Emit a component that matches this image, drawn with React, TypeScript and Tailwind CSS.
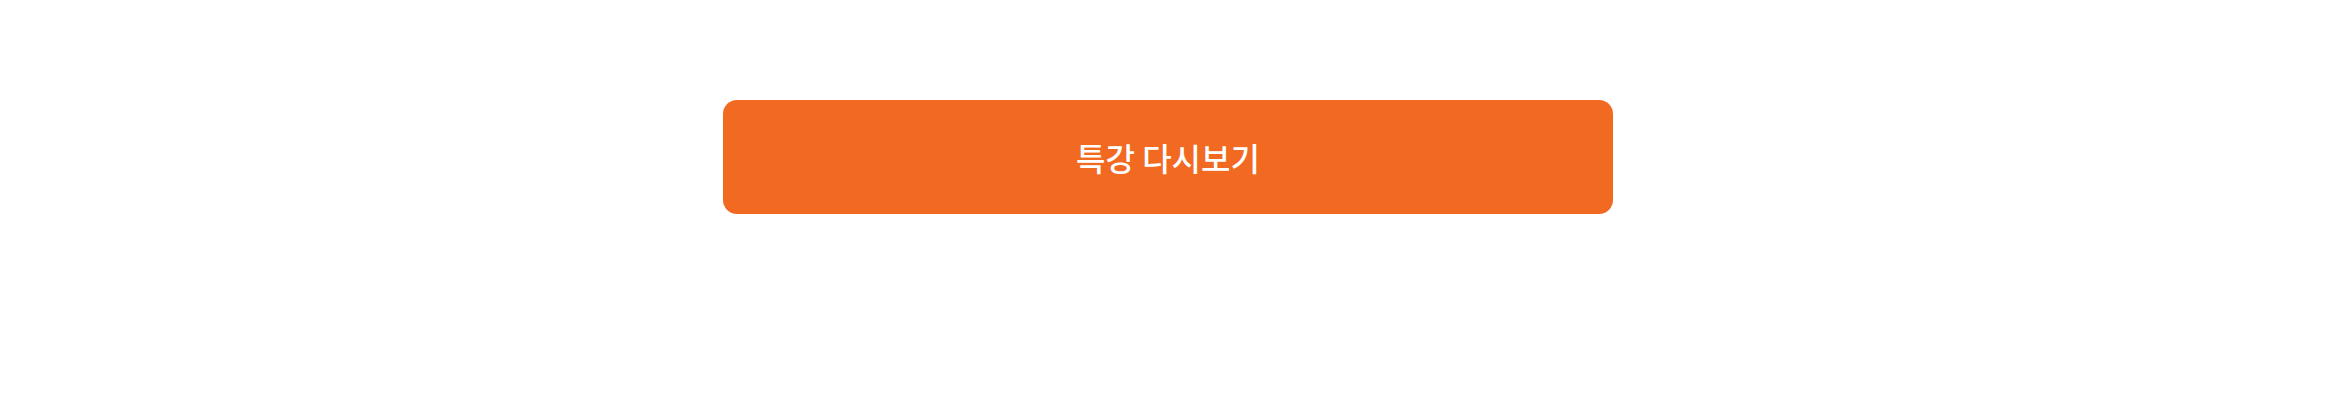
export default function App() {
  return (
    <div className="w-[2336px] h-[402px] bg-white flex justify-center items-start pt-[100px]">
      <button
        type="button"
        className="w-[890px] h-[114px] rounded-[14px] bg-[#f26922] text-white text-[32px] font-medium flex items-center justify-center"
        style={{ fontFamily: '"Noto Sans CJK KR", "Noto Sans", sans-serif' }}
      >
        특강 다시보기
      </button>
    </div>
  );
}
